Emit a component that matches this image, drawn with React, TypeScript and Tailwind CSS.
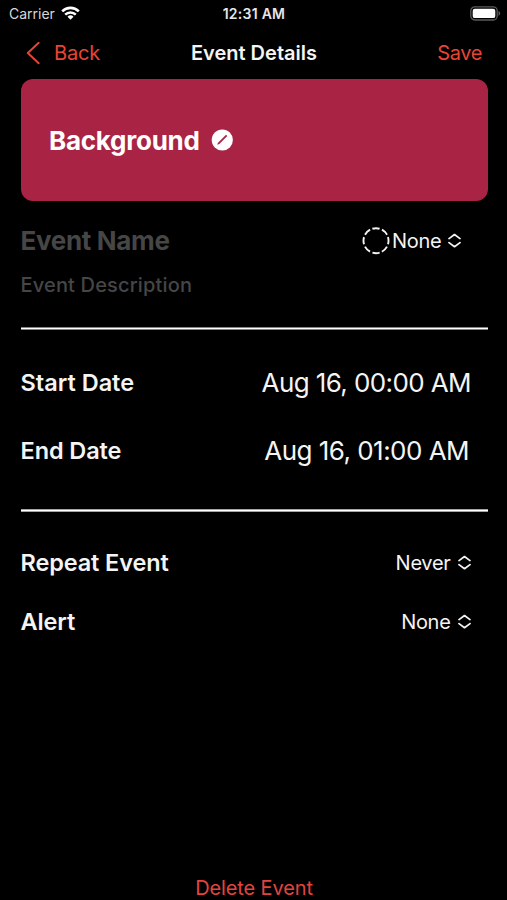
function UpDown() {
  return (
    <svg className="h-4 w-[13px] shrink-0" viewBox="0 0 13 16" fill="none" stroke="currentColor" strokeWidth="1.7" strokeLinecap="round" strokeLinejoin="round">
      <path d="M1 5.6 6.5 1.5 12 5.6M1 9.6 6.5 13.7 12 9.6" />
    </svg>
  );
}

function StatusBar() {
  return (
    <div className="grid h-7 grid-cols-3 items-center pb-[2px] pl-[9px] pr-[8px]">
      <div className="flex items-center gap-[6px] text-[14px] text-[#d8d8d8]">
        <span>Carrier</span>
        <svg className="h-[14px] w-[19px]" viewBox="0 0 19 14" fill="none" stroke="white" strokeWidth="2.6">
          <path d="M1.2 5.3a11.8 11.8 0 0 1 16.6 0" />
          <path d="M4.2 8.6a7.6 7.6 0 0 1 10.6 0" />
          <path d="M9.5 13.8 6.5 10.8a4.3 4.3 0 0 1 6 0Z" fill="white" stroke="none" />
        </svg>
      </div>
      <div className="whitespace-nowrap text-center text-[14px] font-semibold tracking-[0.25px] text-[#e6e6e6]">12:31 AM</div>
      <svg className="-mr-[2px] h-[15px] w-[31px] justify-self-end" viewBox="0 0 31 15">
        <rect x="0.8" y="0.8" width="26.4" height="13.2" rx="4" fill="none" stroke="#5c5c5c" strokeWidth="1.3" />
        <rect x="2.7" y="2.7" width="22.6" height="9.4" rx="2.2" fill="white" />
        <path d="M28.5 5.1c2.3.9 2.3 3.9 0 4.8Z" fill="#5c5c5c" />
      </svg>
    </div>
  );
}

export default function App() {
  return (
    <div className="flex h-[900px] w-[507px] flex-col overflow-hidden bg-black font-['Inter','Liberation_Sans',sans-serif] text-[#f4f4f4]">
      <StatusBar />
      <header className="grid h-[51.4px] grid-cols-3 items-center pb-[1.4px] pl-[26px] pr-[25px] text-[20px] text-[#ea4435]">
        <button className="flex items-center gap-[14px]">
          <svg className="h-6 w-[14px]" viewBox="0 0 14 24" fill="none" stroke="currentColor" strokeWidth="1.9" strokeLinecap="round" strokeLinejoin="round">
            <path d="M12.7 1.8 1.8 12 12.7 22.2" />
          </svg>
          <span className="tracking-[-0.2px]">Back</span>
        </button>
        <h1 className="whitespace-nowrap text-center font-semibold text-[#f4f4f4]">Event Details</h1>
        <button className="justify-self-end tracking-[-0.4px]">Save</button>
      </header>

      <main className="flex flex-1 flex-col pl-[20.5px] pr-[19.5px]">
        <section className="flex h-[121.6px] items-center gap-[11px] rounded-[12px] bg-[#a92444] pl-[28.5px]">
          <h2 className="text-[26px] font-bold tracking-[-0.25px] text-white">Background</h2>
          <svg className="size-[22px]" viewBox="0 0 22 22">
            <circle cx="11.3" cy="11" r="10.6" fill="white" />
            <path d="m6.2 15.7.8-2 8-8 1.3 1.3-8 8Z" fill="#a92444" />
          </svg>
        </section>

        <div className="mt-5 flex h-10 items-center justify-between pr-[26.5px]">
          <span className="-mt-px text-[26px] font-bold tracking-[-0.33px] text-[#464646]">Event Name</span>
          <div className="flex items-center text-[20px]">
            <svg className="mr-[2px] size-7" viewBox="0 0 28 28" fill="none" stroke="currentColor" strokeWidth="1.9">
              <circle cx="14" cy="13.7" r="12.5" pathLength="80" strokeDasharray="7.4 2.6" strokeDashoffset="-1.3" transform="rotate(-112.5 14 13.7)" />
            </svg>
            <span className="mr-[6.5px] tracking-[-0.25px]">None</span>
            <UpDown />
          </div>
        </div>
        <div className="mt-1 flex h-10 items-center text-[20px] font-medium tracking-[0.16px] text-[#464646]">Event Description</div>

        <div className="mt-[22px] h-[3px] border-y border-[#858585] bg-white" />

        <div className="mt-[33px] flex h-10 items-center justify-between pr-[16.5px]">
          <span className="text-[23.5px] font-semibold">Start Date</span>
          <span className="text-[26px] tracking-[-0.6px]">Aug 16, 00:00 AM</span>
        </div>
        <div className="mt-[28px] flex h-10 items-center justify-between pr-[18.5px]">
          <span className="-mt-px text-[23.5px] font-semibold tracking-[-0.1px]">End Date</span>
          <span className="text-[26px] tracking-[-0.53px]">Aug 16, 01:00 AM</span>
        </div>

        <div className="mt-[38px] h-[3px] border-y border-[#a5a5a5] bg-white" />

        <div className="mt-[31.5px] flex h-10 items-center justify-between pr-[17px]">
          <span className="-mt-px text-[23.5px] font-semibold tracking-[-0.12px]">Repeat Event</span>
          <div className="flex items-center gap-[7px] text-[20px]">
            <span className="tracking-[-0.3px]">Never</span>
            <UpDown />
          </div>
        </div>
        <div className="mt-[18.5px] flex h-10 items-center justify-between pr-[17px]">
          <span className="-mt-px text-[23.5px] font-semibold tracking-[-0.12px]">Alert</span>
          <div className="flex items-center gap-[7px] text-[20px]">
            <span className="tracking-[-0.3px]">None</span>
            <UpDown />
          </div>
        </div>

        <button className="mt-auto h-6 text-[20px] leading-6 tracking-[-0.12px] text-[#e0453f]">Delete Event</button>
      </main>
    </div>
  );
}
